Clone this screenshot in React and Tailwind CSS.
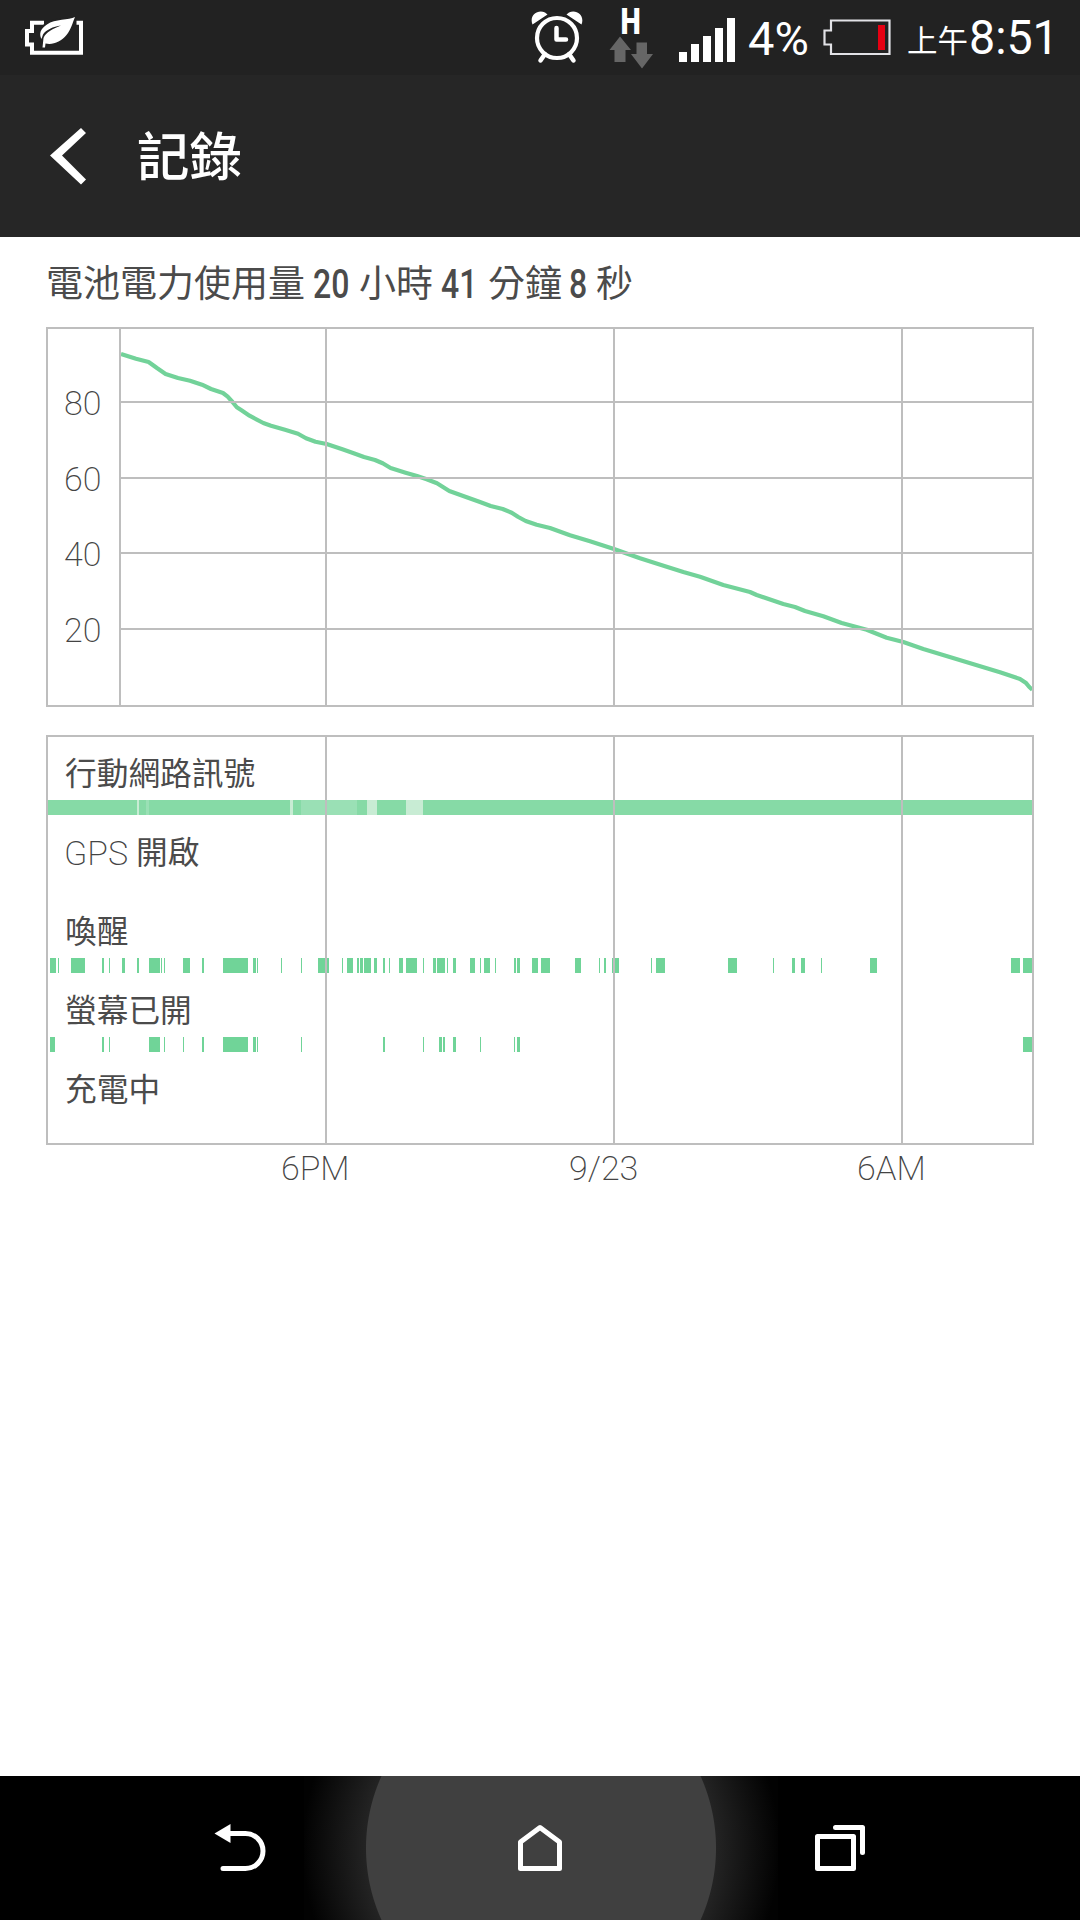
const LEVELS = [
  { label: '80', y: 402 },
  { label: '60', y: 478 },
  { label: '40', y: 553 },
  { label: '20', y: 629 },
]

// x, y pairs of the battery level curve
const CURVE = [
  [121, 354], [136, 358.7], [148.6, 362], [157.3, 368.3], [165.6, 374], [178, 378],
  [190, 380.7], [202, 384.7], [211, 389], [223, 393], [227.7, 396.7], [232.5, 402],
  [236.8, 407.3], [241.5, 410.3], [249.5, 415.7], [263.3, 423], [271, 425.7], [285, 429.7],
  [298, 433.7], [306, 438.3], [315.5, 441.7], [326.6, 444], [342.4, 449.3], [352.3, 452.7],
  [364, 457], [375, 460], [382.7, 463.3], [390.6, 468], [405.6, 472.7], [417, 476],
  [426.7, 479.3], [437, 483.3], [449.3, 491], [466.7, 497.3], [480, 502], [490.7, 506],
  [502.7, 509], [511.7, 512.7], [518.3, 517], [525.7, 521], [536.7, 524.7], [550, 528],
  [570, 535.3], [590, 541.3], [614, 549], [640, 558.3], [666.7, 566.7], [683.3, 572],
  [700, 576.7], [723.3, 585], [750, 592], [756.7, 595], [783.3, 604], [795, 607],
  [805, 611], [823.3, 616.3], [841.7, 623], [866.7, 629.7], [886.7, 637.7], [903.3, 642],
  [923.3, 649], [1000, 672.3], [1020, 679], [1025.7, 682.7], [1029.3, 687], [1032.3, 689.7],
]

// [start, width] of each active period
const SIGNAL = [
  [48, 985, '#86daa6'], [137, 2, '#c8ecd4'], [146, 3, '#9ae0b5'], [290, 3, '#c8ecd4'],
  [301, 56, '#9ae0b5'], [367, 10, '#c8ecd4'], [406, 17, '#c8ecd4'],
]

const AWAKE = [
  [50, 6], [58, 1], [71, 14], [102, 2], [109, 1], [122, 3], [137, 2], [149, 11], [161, 1],
  [164, 1], [183, 7], [202, 2], [223, 25], [253, 3], [257, 1], [281, 1], [301, 1], [318, 11],
  [342, 1], [347, 6], [357, 2], [360, 3], [364, 7], [374, 3], [383, 2], [389, 1], [399, 4],
  [406, 11], [423, 1], [433, 3], [437, 8], [447, 1], [453, 3], [470, 5], [480, 1], [484, 6],
  [495, 1], [514, 2], [517, 3], [532, 6], [541, 9], [575, 6], [599, 1], [604, 2], [612, 7],
  [651, 1], [656, 9], [728, 9], [773, 1], [792, 3], [801, 4], [821, 1], [870, 7], [1011, 9],
  [1023, 9],
]

const SCREEN_ON = [
  [50, 5], [102, 2], [109, 1], [149, 11], [164, 1], [183, 1], [202, 2], [223, 25], [253, 3],
  [257, 1], [301, 1], [383, 2], [423, 1], [439, 3], [443, 2], [453, 3], [480, 1], [514, 1],
  [517, 3], [1023, 9],
]

const ROWS = [
  { label: '行動網路訊號', spans: SIGNAL },
  { latin: 'GPS', label: '開啟', spans: [] },
  { label: '喚醒', spans: AWAKE },
  { label: '螢幕已開', spans: SCREEN_ON },
  { label: '充電中', spans: [] },
]

const PowerSaverIcon = () => (
  <svg className="ml-[25px] h-[38px] w-[58px]" viewBox="25 17 58 38">
    <path
      d="M44 22.700H32V31H27V44.500H32V52.700H81V22.700H76.500"
      fill="none"
      stroke="#fff"
      strokeWidth="4"
    />
    <path
      d="M75 17C69 20.500 55 18.500 47 24.500C40 29 39 34 41.500 39L43 34.500C46 30 53 26.500 61 25.500C53 28.500 46 32 43.500 38L42.500 47.500H45L45.500 43.500C53 45 61 42 66.500 35C71 29.500 72.500 23 75 17Z"
      fill="#fff"
      stroke="#222"
      strokeWidth="4"
      paintOrder="stroke"
    />
  </svg>
)

const AlarmIcon = () => (
  <svg className="h-[54px] w-[54px]" viewBox="530 10 54 54">
    <circle cx="557" cy="38" r="20" fill="none" stroke="#fff" strokeWidth="4.200" />
    <path
      d="M556.500 28V39.500H566M545 54L540.500 60.500M569 54L573.500 60.500"
      fill="none"
      stroke="#fff"
      strokeWidth="4.500"
      strokeLinecap="round"
      strokeLinejoin="round"
    />
    <path
      d="M532.500 24.500C529 16 537 9 545 12.500L547.500 14.500ZM581.500 24.500C585 16 577 9 569 12.500L566.500 14.500Z"
      fill="#fff"
    />
  </svg>
)

const StatusBar = () => (
  <div className="flex h-[75px] items-start bg-[#222222] text-white">
    <div className="mt-[17px]">
      <PowerSaverIcon />
    </div>
    <div className="mt-[10px] ml-[447px]">
      <AlarmIcon />
    </div>
    <div className="mt-[8px] ml-[25px] flex w-[44px] flex-col items-center">
      <span className="h-[26px] scale-x-80 text-[36px] leading-[28px] font-black">H</span>
      <svg className="mt-[2px] h-[33px] w-[44px]" viewBox="609 36 44 33" fill="#666666">
        <path d="M620 36.500L631 50H625.500V62H614.500V50H609.500ZM636.500 42.500H647V54H653L642 68.500L631 54H636.500Z" />
      </svg>
    </div>
    <div className="mt-[18px] ml-[26px] flex h-[44px] items-end gap-1">
      <div className="h-[10px] w-2 bg-white" />
      <div className="h-[18px] w-2 bg-white" />
      <div className="h-[26px] w-2 bg-white" />
      <div className="h-[34px] w-2 bg-white" />
      <div className="h-[44px] w-2 bg-white" />
    </div>
    <span className="mt-[12px] ml-[13px] w-[62px] text-[47px] leading-[54px]">4%</span>
    <svg className="mt-[19px] ml-[13px] h-[37px] w-[68px]" viewBox="823 19 68 37">
      <path
        d="M831 20.500H889.500V54H831V44.500H824.500V30.500H831Z"
        fill="none"
        stroke="#e2e2e6"
        strokeWidth="2.200"
      />
      <rect x="878" y="25" width="7" height="25" fill="#e60012" />
    </svg>
    <span className="mt-[22px] ml-[16px] w-[62px] text-[30.500px] leading-[40px] whitespace-nowrap">上午</span>
    <span className="mt-[11px] origin-left scale-x-97 text-[48px] leading-[54px]">8:51</span>
  </div>
)

const Header = () => (
  <div className="flex h-[162px] items-center bg-[#262626] text-white">
    <svg className="ml-[49px] h-[58px] w-[38px]" viewBox="49 127 38 58">
      <path d="M50 155.500L81 128L86 133L62 155.500L86 179.500L81 184.500Z" fill="#fff" />
    </svg>
    <h1 className="mt-[3px] ml-[50px] text-[52.500px] leading-[60px] font-medium">記錄</h1>
  </div>
)

const Summary = () => (
  <h2 className="flex h-[90px] items-center pt-[6px] text-[37px] whitespace-nowrap text-[#4b4b4b]">
    <span className="w-[267px]">電池電力使用量</span>
    <span className="w-[46px] origin-left scale-x-80 text-[40px] font-medium">20</span>
    <span className="w-[82px]">小時</span>
    <span className="w-[47px] origin-left scale-x-80 text-[40px] font-medium">41</span>
    <span className="w-[81px]">分鐘</span>
    <span className="w-[27px] origin-left scale-x-80 text-[40px] font-medium">8</span>
    <span>秒</span>
  </h2>
)

const LevelChart = () => (
  <svg className="block h-[380px] w-[988px]" viewBox="46 327 988 380">
    <polyline
      points={CURVE.map((p) => p.join(',')).join(' ')}
      fill="none"
      stroke="#72d299"
      strokeWidth="4.200"
      strokeLinejoin="round"
    />
    <g stroke="#bebebe" strokeWidth="2" fill="none">
      <rect x="47" y="328" width="986" height="378" />
      <path d="M120 328V706M326 328V706M614 328V706M902 328V706" />
      {LEVELS.map(({ label, y }) => (
        <path key={label} d={`M120 ${y}H1033`} />
      ))}
    </g>
    {LEVELS.map(({ label, y }) => (
      <text key={label} x="64" y={y + 13} fontSize="34" fontWeight="200" fill="#444444">
        {label}
      </text>
    ))}
  </svg>
)

const Track = ({ spans }) => (
  <svg className="block h-[15px] w-[984px]" viewBox="48 0 984 15" shapeRendering="crispEdges">
    {spans.map(([x, width, fill = '#70d498']) => (
      <rect key={x} x={x} width={width} height="15" fill={fill} />
    ))}
  </svg>
)

const ActivityPanel = () => (
  <div className="relative mt-[28px] h-[410px] w-[988px] border-2 border-[#bebebe]">
    {ROWS.map(({ latin, label, spans }) => (
      <div key={label} className="h-[79px]">
        <div className="flex h-[63px] items-center gap-[8px] pt-[12px] pl-[17px] text-[31.700px] leading-none text-[#4b4b4b]">
          {latin && (
            <span className="-mt-[2px] -ml-px text-[34px] font-extralight text-[#444444]">{latin}</span>
          )}
          <span>{label}</span>
        </div>
        <Track spans={spans} />
      </div>
    ))}
    <div className="absolute top-0 left-[277px] h-full w-[2px] bg-[#bebebe]" />
    <div className="absolute top-0 left-[565px] h-full w-[2px] bg-[#bebebe]" />
    <div className="absolute top-0 left-[853px] h-full w-[2px] bg-[#bebebe]" />
  </div>
)

const TimeAxis = () => (
  <div className="flex pt-[3px] pl-[235px] text-[34px] leading-[40px] font-extralight text-[#444444]">
    <span className="w-[288px]">6PM</span>
    <span className="w-[288px]">9/23</span>
    <span>6AM</span>
  </div>
)

const NavBar = () => (
  <div className="relative flex h-[144px] items-center justify-center overflow-hidden bg-black">
    <div className="absolute top-0 left-[304px] h-full w-[474px] bg-[radial-gradient(circle,#404040_174.5px,#232323_175.5px,#020202_238px)]" />
    <div className="relative flex w-[300px] justify-center">
      <svg className="h-[48px] w-[52px]" viewBox="214.500 1824 52 48">
        <path
          d="M229 1833.500H246A17.500 17.500 0 0 1 246 1868.500H223.500"
          fill="none"
          stroke="#fff"
          strokeWidth="5"
          strokeLinecap="round"
        />
        <path d="M215 1833.500L231 1824V1843Z" fill="#fff" />
      </svg>
    </div>
    <div className="relative flex w-[300px] justify-center">
      <svg className="h-[48px] w-[46px]" viewBox="517 1824 46 48">
        <path
          d="M520.500 1868.500V1842L540 1827.500L559.500 1842V1868.500Z"
          fill="none"
          stroke="#fff"
          strokeWidth="5"
          strokeLinejoin="round"
        />
      </svg>
    </div>
    <div className="relative flex w-[300px] justify-center">
      <svg className="h-[48px] w-[50px]" viewBox="815 1824 50 48">
        <path
          d="M817.500 1836.500H853.500V1868.500H817.500ZM835.500 1827.500H862.500V1852.500"
          fill="none"
          stroke="#fff"
          strokeWidth="5"
          strokeLinecap="round"
          strokeLinejoin="round"
        />
      </svg>
    </div>
  </div>
)

const App = () => (
  <div
    lang="zh-TW"
    className="flex h-[1920px] w-[1080px] flex-col overflow-hidden bg-white font-[Roboto,'Noto_Sans_CJK_TC',sans-serif]"
  >
    <StatusBar />
    <Header />
    <main className="flex-1 pl-[46px]">
      <Summary />
      <LevelChart />
      <ActivityPanel />
      <TimeAxis />
    </main>
    <NavBar />
  </div>
)

export default App
